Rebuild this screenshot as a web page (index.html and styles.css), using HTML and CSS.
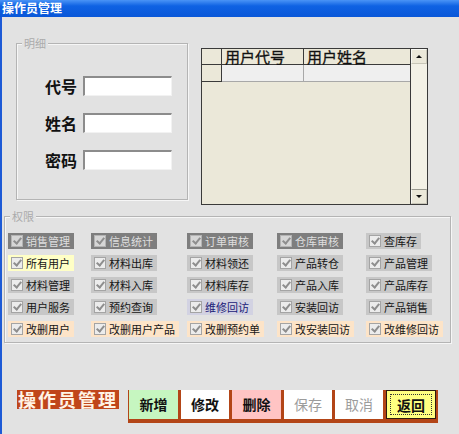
FILE: index.html
```html
<!DOCTYPE html>
<html lang="zh-CN">
<head>
<meta charset="utf-8">
<title>操作员管理</title>
<link rel="stylesheet" href="styles.css">
</head>
<body>
<div class="window">
  <div class="titlebar">操作员管理</div>
  <div class="client">
    <div class="top">
      <div class="group detail">
        <div class="legend">明细</div>
        <div class="fields">
          <div class="field"><span class="flabel">代号</span><span class="input"></span></div>
          <div class="field"><span class="flabel">姓名</span><span class="input"></span></div>
          <div class="field"><span class="flabel">密码</span><span class="input"></span></div>
        </div>
      </div>
      <div class="grid">
        <div class="cells">
          <div class="hrow">
            <div class="ind"></div>
            <div class="c1">用户代号</div>
            <div class="c2">用户姓名</div>
          </div>
          <div class="drow">
            <div class="ind"></div>
            <div class="c1"></div>
            <div class="c2"></div>
          </div>
        </div>
        <div class="scroll">
          <div class="sbtn"><span class="tri up"></span></div>
          <div class="track"></div>
          <div class="sbtn down"><span class="tri dn"></span></div>
        </div>
      </div>
    </div>

    <div class="group perm">
      <div class="legend">权限</div>
      <div class="checks">
        <span class="item dark"><span class="cb"></span>销售管理</span>
        <span class="item dark"><span class="cb"></span>信息统计</span>
        <span class="item dark"><span class="cb"></span>订单审核</span>
        <span class="item dark"><span class="cb"></span>仓库审核</span>
        <span class="item gray"><span class="cb"></span>查库存</span>

        <span class="item yellow"><span class="cb"></span>所有用户</span>
        <span class="item gray"><span class="cb"></span>材料出库</span>
        <span class="item gray"><span class="cb"></span>材料领还</span>
        <span class="item gray"><span class="cb"></span>产品转仓</span>
        <span class="item gray"><span class="cb"></span>产品管理</span>

        <span class="item gray"><span class="cb"></span>材料管理</span>
        <span class="item gray"><span class="cb"></span>材料入库</span>
        <span class="item gray"><span class="cb"></span>材料库存</span>
        <span class="item gray"><span class="cb"></span>产品入库</span>
        <span class="item gray"><span class="cb"></span>产品库存</span>

        <span class="item gray"><span class="cb"></span>用户服务</span>
        <span class="item gray"><span class="cb"></span>预约查询</span>
        <span class="item blue"><span class="cb"></span>维修回访</span>
        <span class="item gray"><span class="cb"></span>安装回访</span>
        <span class="item gray"><span class="cb"></span>产品销售</span>

        <span class="item peach"><span class="cb"></span>改删用户</span>
        <span class="item peach"><span class="cb"></span>改删用户产品</span>
        <span class="item peach"><span class="cb"></span>改删预约单</span>
        <span class="item peach"><span class="cb"></span>改安装回访</span>
        <span class="item peach"><span class="cb"></span>改维修回访</span>
      </div>
    </div>

    <div class="bottom">
      <div class="caption">操作员管理</div>
      <div class="buttons">
        <div class="btn add">新增</div>
        <div class="btn edit">修改</div>
        <div class="btn del">删除</div>
        <div class="btn off w48">保存</div>
        <div class="btn off w48">取消</div>
        <div class="btn back"><span class="focus">返回</span></div>
      </div>
    </div>
  </div>
</div>
</body>
</html>
```

FILE: styles.css
```css
html, body {
  margin: 0;
  padding: 0;
}
body {
  width: 459px;
  height: 434px;
  overflow: hidden;
  font-family: "Noto Sans CJK SC", "Noto Sans", sans-serif;
  background: #e2e2e2;
}
.window {
  width: 459px;
  height: 434px;
  background: #e2e2e2;
}
.titlebar {
  height: 17px;
  line-height: 16px;
  padding-left: 2px;
  color: #fff;
  font-size: 12px;
  font-weight: bold;
  background: linear-gradient(#4a94f6 0%, #0f62e3 35%, #0957d8 100%);
}
.client {
  height: 417px;
  border-left: 2px solid #1d5ad6;
  box-sizing: border-box;
}

/* group boxes */
.group {
  box-sizing: border-box;
  border: 1px solid #b4b4b4;
  box-shadow: inset 1px 1px 0 #f6f6f6, 1px 1px 0 #f6f6f6;
}
.legend {
  width: max-content;
  height: 12px;
  line-height: 12px;
  margin: -7px 0 0 5px;
  padding: 0 2px;
  font-size: 11px;
  color: #ababab;
  background: #e2e2e2;
}

.top {
  display: flex;
  align-items: flex-start;
  padding-top: 26px;
}
.detail {
  margin-left: 14px;
  width: 172px;
  height: 157px;
}
.fields {
  margin-top: 27px;
  display: flex;
  flex-direction: column;
  gap: 17px;
}
.field {
  display: flex;
  align-items: center;
  height: 20px;
  padding-left: 28px;
}
.flabel {
  width: 32px;
  font-size: 16px;
  font-weight: bold;
  line-height: 20px;
  color: #111;
}
.input {
  margin-left: 6px;
  width: 89px;
  height: 20px;
  box-sizing: border-box;
  background: #fff;
  border-top: 2px solid #8c8c8c;
  border-left: 2px solid #8c8c8c;
  border-right: 1px solid #f2f2f2;
  border-bottom: 1px solid #f2f2f2;
}

/* data grid */
.grid {
  margin-left: 13px;
  margin-top: 5px;
  width: 227px;
  height: 157px;
  box-sizing: border-box;
  border: 1px solid #3a3a3a;
  background: #ebe8d9;
  display: flex;
}
.cells {
  flex: 1;
}
.hrow, .drow {
  display: flex;
}
.hrow {
  height: 16px;
  box-sizing: border-box;
  border-bottom: 1px solid #3a3a3a;
  font-size: 15px;
  line-height: 15px;
  color: #111;
  -webkit-text-stroke: 0.3px #111;
}
.hrow .ind {
  width: 20px;
  box-sizing: border-box;
  border-right: 1px solid #3a3a3a;
}
.hrow .c1 {
  width: 82px;
  box-sizing: border-box;
  border-right: 1px solid #3a3a3a;
  padding-left: 3px;
}
.hrow .c2 {
  flex: 1;
  padding-left: 3px;
}
.drow {
  height: 17px;
}
.drow .ind {
  width: 20px;
  box-sizing: border-box;
  border-right: 1px solid #3a3a3a;
  border-bottom: 1px solid #3a3a3a;
}
.drow .c1 {
  width: 82px;
  box-sizing: border-box;
  background: #efefef;
  border-right: 1px solid #a8a8a8;
  border-bottom: 1px solid #a8a8a8;
}
.drow .c2 {
  flex: 1;
  background: #efefef;
  border-bottom: 1px solid #a8a8a8;
}
.scroll {
  width: 17px;
  box-sizing: border-box;
  border-left: 1px solid #3a3a3a;
  display: flex;
  flex-direction: column;
  background: #f3f1e6;
}
.sbtn {
  height: 15px;
  box-sizing: border-box;
  background: #ebe8d9;
  border: 1px solid #f8f8f2;
  border-right-color: #c8c6b8;
  border-bottom-color: #c8c6b8;
  display: flex;
  align-items: center;
  justify-content: center;
}
.sbtn.down {
  border-top: 1px solid #9a9a90;
}
.track {
  flex: 1;
}
.tri {
  width: 0;
  height: 0;
  border-left: 3px solid transparent;
  border-right: 3px solid transparent;
}
.tri.up {
  border-bottom: 3px solid #111;
}
.tri.dn {
  border-top: 3px solid #111;
}

/* permissions */
.perm {
  margin-top: 11px;
  margin-left: 2px;
  width: 447px;
  height: 127px;
}
.checks {
  margin-top: 11px;
  padding-left: 3px;
  display: grid;
  grid-template-columns: 83px 96px 90px 89px 1fr;
  grid-auto-rows: 16px;
  row-gap: 6px;
  justify-items: start;
}
.item {
  display: inline-flex;
  align-items: center;
  gap: 3px;
  height: 16px;
  padding: 0 4px 0 3px;
  font-size: 11px;
  line-height: 16px;
  color: #151515;
  white-space: nowrap;
}
.item.dark {
  background: #7e7e7e;
  color: #dedede;
}
.item.gray {
  background: #c7c7c7;
}
.item.yellow {
  background: #ffffc6;
}
.item.blue {
  background: #d2d2e2;
  color: #1a1a78;
}
.item.peach {
  background: #fde4c8;
}
.cb {
  position: relative;
  width: 12px;
  height: 12px;
  box-sizing: border-box;
  border: 1px solid #a4a4a4;
  background: #ececec;
  flex: none;
}
.item.dark .cb {
  background: #d6d6d6;
  border-color: #b4b4b4;
}
.cb::after {
  content: "";
  position: absolute;
  left: 3px;
  top: 0px;
  width: 3px;
  height: 6px;
  border: solid #8e8e8e;
  border-width: 0 2px 2px 0;
  transform: rotate(40deg);
}

/* bottom bar */
.bottom {
  display: flex;
  align-items: flex-start;
  margin-top: 47px;
  padding-left: 15px;
}
.caption {
  height: 19px;
  line-height: 19px;
  padding: 0 1px;
  font-size: 18px;
  font-weight: bold;
  letter-spacing: 2px;
  color: #fff4e6;
  background: #c0461a;
}
.buttons {
  margin-left: 9px;
  display: flex;
  gap: 3px;
  padding: 0 2px 4px 1px;
  background: #b34517;
}
.btn {
  width: 49px;
  height: 29px;
  line-height: 29px;
  text-align: center;
  font-size: 14px;
  font-weight: bold;
  color: #111;
  background: #fff;
}
.btn.w48, .btn.edit {
  width: 48px;
}
.btn.add {
  background: #c6f6c0;
}
.btn.del {
  background: #ffc4c4;
}
.btn.off {
  color: #9c9c9c;
  font-weight: normal;
}
.btn.back {
  width: 50px;
  box-sizing: border-box;
  background: #ffff80;
  border: 1px solid #2a1a10;
  display: flex;
  padding: 3px;
}
.focus {
  flex: 1;
  line-height: 20px;
  border: 1px dotted #333;
}
```
